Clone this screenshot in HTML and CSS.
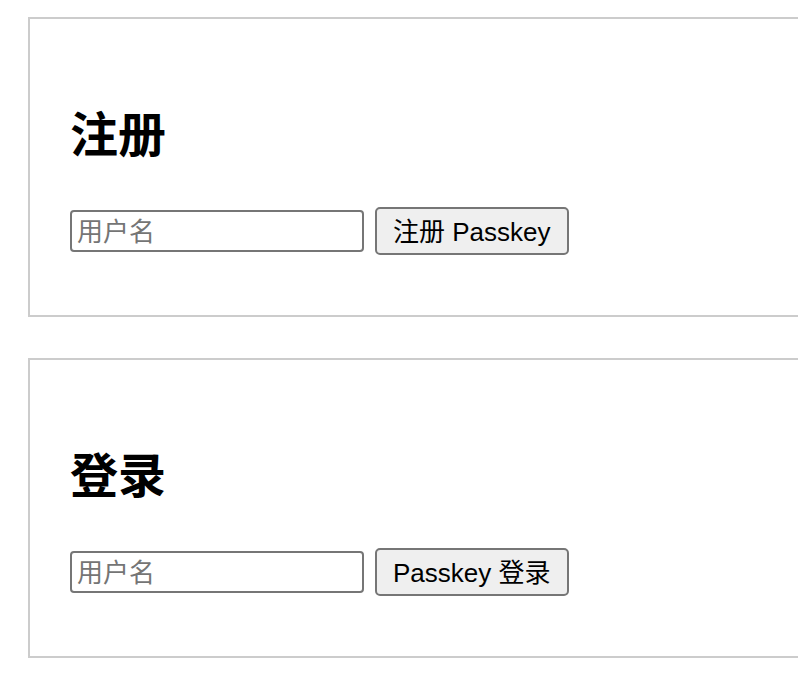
FILE: index.html
```html
<!DOCTYPE html>
<html lang="zh-CN">
<head>
    <meta charset="UTF-8">
    <meta name="viewport" content="width=device-width, initial-scale=1.0">
    <title>Passkey 演示</title>
    <link rel="stylesheet" href="styles.css">
</head>
<body>
    <div class="page">
        <!-- 注册区域 -->
        <section class="panel">
            <h2 class="panel-title">注册</h2>
            <form class="panel-form" id="register-form">
                <input type="text" class="name-input" id="register-username" placeholder="用户名">
                <button type="button" class="action-btn">注册 Passkey</button>
            </form>
        </section>

        <!-- 登录区域 -->
        <section class="panel">
            <h2 class="panel-title">登录</h2>
            <form class="panel-form" id="login-form">
                <input type="text" class="name-input" id="login-username" placeholder="用户名">
                <button type="button" class="action-btn">Passkey 登录</button>
            </form>
        </section>
    </div>
</body>
</html>
```

FILE: styles.css
```css
/* Grundlayout */
body {
    margin: 0;
    font-family: "Liberation Sans", "Noto Sans CJK SC", sans-serif;
    background-color: #ffffff;
    color: #000;
}

.page {
    padding: 17px 0 0 28px;
}

/* Kasten pro Abschnitt */
.panel {
    box-sizing: border-box;
    width: 800px;
    padding: 40px 40px 60px;
    margin-bottom: 41px;
    border: 2px solid #cccccc;
}

.panel-title {
    margin: 39px 0 42px;
    font-size: 48px;
    line-height: 67px;
    font-weight: bold;
    font-family: "Noto Sans CJK SC", sans-serif;
}

/* Eingabe + Button nebeneinander */
.panel-form {
    display: flex;
    align-items: center;
    gap: 11px;
    height: 48px;
}

.name-input {
    box-sizing: border-box;
    width: 294px;
    height: 42px;
    padding: 4px 5px 2px;
    border: 2px solid #767676;
    border-radius: 4px;
    font-family: "Liberation Sans", "Noto Sans CJK SC", sans-serif;
    font-size: 26px;
    color: #000;
    background: #fff;
}

.name-input::placeholder {
    color: #757575;
}

.action-btn {
    box-sizing: border-box;
    height: 48px;
    padding: 0 16px 4px;
    border: 2px solid #767676;
    border-radius: 5px;
    background-color: #efefef;
    font-family: "Liberation Sans", "Noto Sans CJK SC", sans-serif;
    font-size: 26px;
    color: #000;
}
```
